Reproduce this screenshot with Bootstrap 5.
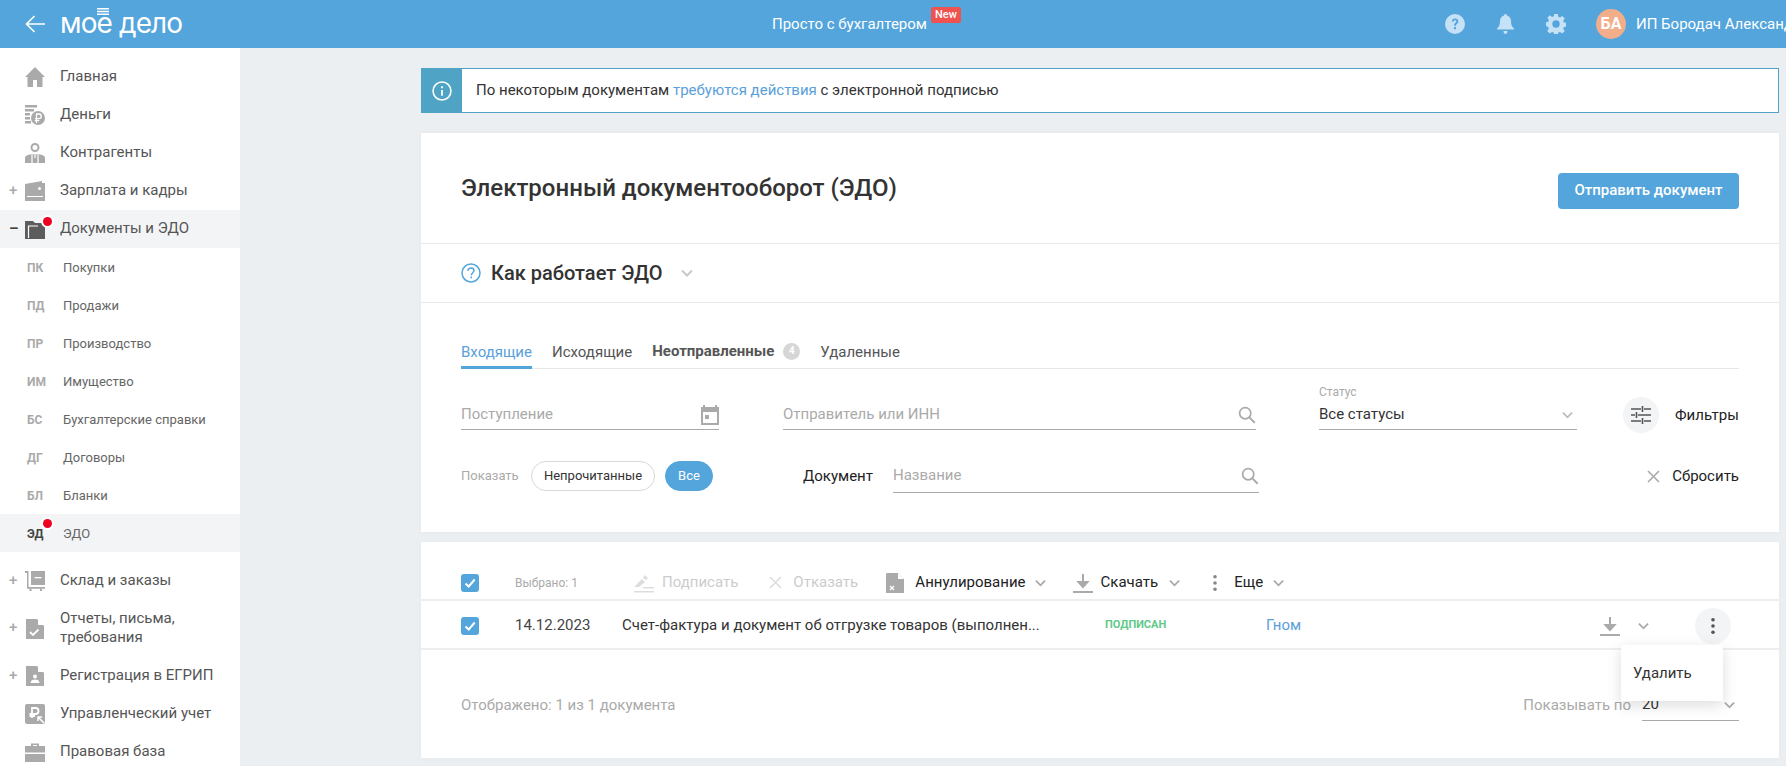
<!DOCTYPE html>
<html lang="ru">
<head>
<meta charset="utf-8">
<title>Электронный документооборот (ЭДО)</title>
<link rel="stylesheet" href="https://cdn.jsdelivr.net/npm/bootstrap@5.3.0/dist/css/bootstrap.min.css">
<style>
html,body{height:100%;overflow:hidden}
body{font-family:Roboto,"Liberation Sans",sans-serif;font-size:15px;background:#ebeff2;color:#333}
a{text-decoration:none}
.topbar{height:48px;background:#53a5dc;color:#fff;white-space:nowrap;overflow:hidden}
.top-left{width:241px;padding-left:25px;flex:none}
.logo-text{position:relative;margin-left:15px;font-family:Inter,sans-serif;font-weight:400;font-size:28px;line-height:48px;letter-spacing:-.9px;top:-1px}
.logo-bars{position:absolute;left:37px;top:9px;width:12px;height:7px}
.top-center{width:1204px;padding-left:531px;flex:none}
.new-tag{background:#ef5350;color:#fff;font-size:11px;font-weight:500;line-height:16px;padding:0 4px;border-radius:2px;margin-left:4px;margin-top:-18px}
.top-icons{gap:32px;flex:none}
.avatar{width:30px;height:30px;border-radius:50%;background:#f2ae8a;font-weight:700;font-size:16px;flex:none;margin-left:30px;margin-right:10px}
.side{width:240px;height:718px;background:#fff;padding-top:10px;flex:none;overflow:hidden;color:#555}
.side-row{height:38px;padding-left:9px;padding-bottom:2px;line-height:19px}
.side-row.tall{height:57px}
.side-row.on,.sub-row.on{background:#f3f4f5}
.group-gap{margin-top:10px}
.tog{width:16px;flex:none;color:#aaa;font-size:15px;line-height:1;font-weight:500}
.tog.dark{color:#444;font-weight:700}
.s-ic{position:relative;top:1px;width:20px;height:20px;flex:none;margin-right:15px}
.s-ic svg{display:block;width:20px;height:20px}
.red-dot{position:absolute;width:9px;height:9px;background:#ee0022;border-radius:50%;box-shadow:0 0 0 2px #fff}
.sub-row{height:38px;padding-left:27px;padding-top:2px;font-size:13px;color:#666;position:relative}
.abbr{width:36px;font-size:12px;font-weight:700;color:#aaa;flex:none}
.sub-row.on .abbr{color:#444}
.main-area{padding:20px 7px 0 181px;flex:1;min-width:0}
.notice{height:45px;background:#fff;border:1px solid #4fa3c4}
.notice-ic{width:40px;background:#4fa3c4;height:100%;flex:none;margin-right:14px}
.bl{color:#5aa0da}
.panel{background:#fff;box-shadow:0 0 6px rgba(0,0,0,.03)}
.panel-a{height:399px;margin-top:20px}
.head-zone{height:111px;padding:0 40px;border-bottom:1px solid #e8eaec}
.page-title{font-size:24px;font-weight:500;color:#333;margin:0}
.send-btn{width:181px;height:36px;background:#53a5dc;border:0;color:#fff;font-weight:500;font-size:15px;border-radius:4px;padding:0;margin-top:5px}
.how-zone{height:59px;padding:0 40px;border-bottom:1px solid #e8eaec}
.how-title{font-size:20px;font-weight:500;color:#333;margin:0 18px 0 10px}
.filter-zone{padding:0 40px}
.tabbar{margin-top:30px;height:36px;border-bottom:1px solid #e4e6e8;gap:20px;color:#555}
.tabbar>span{height:36px;line-height:38px}
.tab-on{color:#5aa0da;border-bottom:3px solid #53a5dc;width:71px}
.tab-b{font-weight:700;color:#555}
.cnt{width:17px;height:17px;background:#d6d6d6;color:#fff;border-radius:50%;font-size:10px;font-weight:700;margin-left:9px;line-height:1}
.frow1{height:61px;align-items:flex-start}
.ufield{height:36px;border-bottom:1px solid #aaa;color:#aaa;flex:none;position:relative;padding-top:6px}
.f1{width:258px;margin-top:25px}
.f2{width:473px;margin-top:25px;margin-left:64px}
.f3{width:258px;margin-top:25px;margin-left:63px;color:#333}
.f3-label{position:absolute;left:0;top:-9px;font-size:12px;color:#aaa;line-height:14px}
.fil-wrap{margin-left:46px;margin-top:28px;color:#222}
.fil-c{width:36px;height:36px;border-radius:50%;background:#f3f4f5;margin-right:16px}
.frow2{height:92px;align-items:center}
.show-l{font-size:13px;color:#aaa;width:70px}
.pill{height:30px;border-radius:15px;border:1px solid #d8d8d8;line-height:28px;font-size:13px;color:#333;width:124px;text-align:center;margin-right:10px}
.pill-on{background:#53a5dc;border-color:#53a5dc;color:#fff;width:48px;margin-right:0}
.doc-l{margin-left:90px;width:90px;color:#222}
.f4{width:366px;height:33px;padding-top:0}
.reset{margin-left:auto;color:#222}
.panel-b{height:216px;margin-top:10px;position:relative}
.tool-row{height:59px;padding:24px 40px 0;border-bottom:2px solid #eceef0;color:#222}
.chk{width:18px;height:18px;border-radius:3px;background:#53a5dc;flex:none}
.sel-t{font-size:12px;color:#aaa;margin-left:36px;width:119px}
.dim{color:#ccc}
.m8{margin-left:8px}.m9{margin-left:9px}.m10{margin-left:10px}.m11{margin-left:11px}.m16{margin-left:16px}.m27{margin-left:27px}.m31{margin-left:31px}.m32{margin-left:32px}
.w-cancel{width:93px}
.doc-row{height:49px;padding:2px 40px 0;border-bottom:2px solid #eceef0;color:#333}
.d-date{margin-left:36px;width:107px;color:#444}
.d-title{width:418px;white-space:nowrap}
.d-stat{margin-left:65px;width:161px;font-size:11px;font-weight:700;color:#5fc98a}
.d-who{width:334px}
.kebab{width:36px;height:36px;border-radius:50%;background:#f3f4f5;margin-left:46px}
.car-gray{color:#aaa}
.foot-row{height:106px;padding:4px 40px 0;color:#aaa}
.pg-l{margin-left:auto;margin-right:11px}
.pg-sel{width:97px;height:31px;border-bottom:1px solid #aaa;color:#333}
.menu-pop{position:absolute;left:1200px;top:103px;width:102px;height:56px;background:#fff;box-shadow:0 4px 14px rgba(0,0,0,.14);padding-left:12px;color:#333;z-index:3}
</style>
</head>
<body>
<svg width="0" height="0" class="position-absolute">
<defs>
<symbol id="caret" viewBox="0 0 12 8"><path d="M1 1.500l5 5 5-5" fill="none" stroke="currentColor" stroke-width="2"/></symbol>
<symbol id="lens" viewBox="0 0 20 20"><circle cx="8" cy="8" r="6.200" fill="none" stroke="currentColor" stroke-width="1.900"/><path d="M12.600 12.600l6 6" stroke="currentColor" stroke-width="2.200"/></symbol>
<symbol id="check" viewBox="0 0 18 18"><path d="M4.500 9.500l3.200 3 6-7" fill="none" stroke="#fff" stroke-width="2"/></symbol>
<symbol id="dl" viewBox="0 0 20 20"><path d="M10 1v12M5.500 9L10 14l4.500-5z" fill="#aaa" stroke="#aaa" stroke-width="2"/><path d="M0 19h20" stroke="#aaa" stroke-width="2"/></symbol>
<symbol id="dots" viewBox="0 0 6 20"><circle cx="3" cy="3" r="2"/><circle cx="3" cy="10" r="2"/><circle cx="3" cy="17" r="2"/></symbol>
</defs>
</svg>

<header class="topbar d-flex align-items-center">
  <div class="top-left d-flex align-items-center">
    <svg width="20" height="18" viewBox="0 0 20 18"><path d="M20 9H1.500M9.500 1L1.500 9l8 8" fill="none" stroke="#fff" stroke-width="1.600"/></svg>
    <span class="logo-text">мое дело<svg class="logo-bars" viewBox="0 0 12 7"><path d="M0 .8h12M0 3.500h12M0 6.200h12" stroke="#fff" stroke-width="1.400"/></svg></span>
  </div>
  <div class="top-center d-flex align-items-center">
    <span>Просто с бухгалтером</span><span class="new-tag">New</span>
  </div>
  <div class="top-icons d-flex align-items-center">
    <svg width="20" height="20" viewBox="0 0 20 20"><circle cx="10" cy="10" r="10" fill="#c5e1f6"/><path d="M6.800 7.600C6.900 5.700 8.200 4.600 10.100 4.600c1.900 0 3.200 1.100 3.200 2.800 0 2.400-2.400 2.300-2.400 4.400H9c0-3 2.300-3 2.300-4.400 0-.8-.5-1.200-1.200-1.200-.8 0-1.300.5-1.400 1.400z M9 13h2v2.200H9z" fill="#53a5dc"/></svg>
    <svg width="17" height="20" viewBox="0 0 17 20"><path d="M8.500 0c1 0 1.400.7 1.400 1.500 2.700.6 4.100 2.900 4.100 5.500 0 3.700.8 5.500 3 7.500v1H0v-1c2.200-2 3-3.800 3-7.500 0-2.600 1.400-4.900 4.100-5.500C7.100.7 7.500 0 8.500 0zM6.500 17h4c0 1.700-.8 3-2 3s-2-1.300-2-3z" fill="#c5e1f6"/></svg>
    <svg width="20" height="20" viewBox="0 0 20 20"><path fill-rule="evenodd" d="M8.200 0h3.600l.5 2.800 1.700.7 2.300-1.600 2.500 2.500-1.600 2.300.7 1.700 2.800.5v3.600l-2.800.5-.7 1.700 1.600 2.300-2.500 2.500-2.300-1.600-1.700.7-.5 2.800H8.200l-.5-2.800-1.700-.7-2.300 1.600-2.500-2.500 1.600-2.300-.7-1.700L-.6 11.700V8.300l2.800-.5.7-1.700L1.300 3.800l2.500-2.500 2.300 1.600 1.700-.7zM10 6.300a3.700 3.700 0 1 0 0 7.400 3.700 3.700 0 0 0 0-7.400z" fill="#c5e1f6"/></svg>
  </div>
  <div class="avatar d-flex align-items-center justify-content-center">БА</div>
  <span>ИП Бородач Александр</span>
</header>

<div class="d-flex">
  <nav class="side">
    <div class="side-row d-flex align-items-center"><span class="tog"></span><span class="s-ic"><svg viewBox="0 0 20 20"><path d="M10 0L0 10h2.500v10h5.500v-7h4v7h5.500V10H20z" fill="#aaa"/></svg></span>Главная</div>
    <div class="side-row d-flex align-items-center"><span class="tog"></span><span class="s-ic"><svg viewBox="0 0 20 20"><path d="M0 0h12v2.500H0zM0 4h9v2.500H0zM0 8h5v2.500H0zM0 12h5v2.500H0zM0 16h6v2.500H0z" fill="#aaa"/><circle cx="13" cy="13" r="7" fill="#aaa"/><path d="M11.500 18V9h2.500a2.300 2.300 0 0 1 0 4.600h-4M9.800 15.700h4.500" fill="none" stroke="#fff" stroke-width="1.300"/></svg></span>Деньги</div>
    <div class="side-row d-flex align-items-center"><span class="tog"></span><span class="s-ic"><svg viewBox="0 0 20 20"><circle cx="10" cy="4.500" r="3.500" fill="none" stroke="#aaa" stroke-width="2"/><path d="M0 20v-5c0-2 3-3.500 6-3.500h8c3 0 6 1.500 6 3.500v5z" fill="#aaa"/><path d="M7 12v8M13 12v8M10 12v3" stroke="#fff" stroke-width="1.200"/></svg></span>Контрагенты</div>
    <div class="side-row d-flex align-items-center"><span class="tog">+</span><span class="s-ic"><svg viewBox="0 0 20 20"><path d="M0 3l17-3v2h3v18H0z" fill="#aaa"/><path d="M2 15.500h16" stroke="#fff" stroke-width="1"/><circle cx="14.500" cy="7.500" r="1.500" fill="#fff"/></svg></span>Зарплата и кадры</div>
    <div class="side-row on d-flex align-items-center"><span class="tog dark">–</span><span class="s-ic"><svg viewBox="0 0 20 20"><path d="M0 2h8l2 2h10v16H0z" fill="#5c5c5c"/><path d="M3.500 19V7h9.500" fill="none" stroke="#fff" stroke-width="1.200"/></svg><span class="red-dot" style="left:18px;top:-2px"></span></span>Документы и ЭДО</div>
    <div class="sub-row d-flex align-items-center"><span class="abbr">ПК</span>Покупки</div>
    <div class="sub-row d-flex align-items-center"><span class="abbr">ПД</span>Продажи</div>
    <div class="sub-row d-flex align-items-center"><span class="abbr">ПР</span>Производство</div>
    <div class="sub-row d-flex align-items-center"><span class="abbr">ИМ</span>Имущество</div>
    <div class="sub-row d-flex align-items-center"><span class="abbr">БС</span>Бухгалтерские справки</div>
    <div class="sub-row d-flex align-items-center"><span class="abbr">ДГ</span>Договоры</div>
    <div class="sub-row d-flex align-items-center"><span class="abbr">БЛ</span>Бланки</div>
    <div class="sub-row on d-flex align-items-center"><span class="abbr">ЭД</span>ЭДО<span class="red-dot" style="left:43px;top:5px"></span></div>
    <div class="side-row group-gap d-flex align-items-center"><span class="tog">+</span><span class="s-ic"><svg viewBox="0 0 20 20"><path d="M0 0h3.500v16H20v1.800H2V2H0z" fill="#aaa"/><path d="M6 0h14v14H6z" fill="#aaa"/><path d="M9.500 6h7v1.300h-7z" fill="#fff"/><circle cx="5.500" cy="19" r="1.200" fill="#aaa"/><circle cx="16" cy="19" r="1.200" fill="#aaa"/></svg></span>Склад и заказы</div>
    <div class="side-row tall d-flex align-items-center"><span class="tog">+</span><span class="s-ic"><svg viewBox="0 0 20 20"><path d="M1 0h11l7 7v13H1z" fill="#aaa"/><path d="M13 0l6 6h-6z" fill="#fff"/><path d="M5 13l3 3 5.500-5.500" fill="none" stroke="#fff" stroke-width="1.800"/></svg></span><span>Отчеты, письма,<br>требования</span></div>
    <div class="side-row d-flex align-items-center"><span class="tog">+</span><span class="s-ic"><svg viewBox="0 0 20 20"><path d="M1 0h11l7 7v13H1z" fill="#aaa"/><path d="M13 0l6 6h-6z" fill="#fff"/><circle cx="10" cy="10.500" r="2" fill="#fff"/><path d="M5.500 17c0-2.500 2-3.500 4.500-3.500s4.500 1 4.500 3.500z" fill="#fff"/></svg></span>Регистрация в ЕГРИП</div>
    <div class="side-row d-flex align-items-center"><span class="tog"></span><span class="s-ic"><svg viewBox="0 0 20 20"><rect width="20" height="20" rx="2" fill="#aaa"/><path d="M7 14V4h3.500a3 3 0 0 1 0 6H4.500M4.500 12H10" fill="none" stroke="#fff" stroke-width="1.800"/><path d="M19 19l-6-6M13 17v-4h4" fill="none" stroke="#fff" stroke-width="1.500"/></svg></span>Управленческий учет</div>
    <div class="side-row d-flex align-items-center"><span class="tog"></span><span class="s-ic"><svg viewBox="0 0 20 20"><path d="M6 4V1.500h8V4h6v6.500H0V4zM8 4h4V3H8zM0 12h20v8H0z" fill="#aaa"/></svg></span>Правовая база</div>
  </nav>

  <main class="main-area">
    <div class="notice d-flex align-items-center">
      <div class="notice-ic d-flex align-items-center justify-content-center"><svg width="20" height="20" viewBox="0 0 19 19"><circle cx="9.500" cy="9.500" r="8.500" fill="none" stroke="#fff" stroke-width="1.500"/><path d="M9.500 8.500v5.500M9.500 5v1.800" stroke="#fff" stroke-width="1.700"/></svg></div>
      <span>По некоторым документам <a class="bl" href="#">требуются действия</a> с электронной подписью</span>
    </div>

    <section class="panel panel-a">
      <div class="head-zone d-flex align-items-center justify-content-between">
        <h1 class="page-title">Электронный документооборот (ЭДО)</h1>
        <button class="btn send-btn" type="button">Отправить документ</button>
      </div>
      <div class="how-zone d-flex align-items-center">
        <svg width="20" height="20" viewBox="0 0 20 20"><circle cx="10" cy="10" r="9" fill="none" stroke="#53a5dc" stroke-width="1.500"/><path d="M7 7.800C7 5.900 8.300 5 10 5c1.800 0 3 1 3 2.600 0 2.100-2.700 2.300-2.700 4.700" fill="none" stroke="#53a5dc" stroke-width="1.500"/><path d="M10.300 13.500v1.800" stroke="#53a5dc" stroke-width="1.600"/></svg>
        <h2 class="how-title">Как работает ЭДО</h2>
        <svg width="12" height="8" style="color:#c8c8c8"><use href="#caret"/></svg>
      </div>
      <div class="filter-zone">
        <div class="tabbar d-flex">
          <span class="tab-on">Входящие</span>
          <span>Исходящие</span>
          <span class="tab-b d-flex align-items-center">Неотправленные<i class="cnt d-flex align-items-center justify-content-center fst-normal">4</i></span>
          <span>Удаленные</span>
        </div>
        <div class="frow1 d-flex">
          <div class="ufield f1 d-flex align-items-center justify-content-between"><span>Поступление</span><svg width="18" height="20" viewBox="0 0 18 20"><path d="M4 0v2h10V0h2v2h2v18H0V2h2V0zM2 7v11h14V7z" fill="#aaa"/><rect x="4" y="10" width="4" height="4" fill="#aaa"/></svg></div>
          <div class="ufield f2 d-flex align-items-center justify-content-between"><span>Отправитель или ИНН</span><svg width="18" height="18"><use href="#lens"/></svg></div>
          <div class="ufield f3 d-flex align-items-center justify-content-between"><span class="f3-label">Статус</span><span>Все статусы</span><svg width="11" height="8" class="me-1" style="color:#bbb"><use href="#caret"/></svg></div>
          <div class="fil-wrap d-flex align-items-center"><span class="fil-c d-flex align-items-center justify-content-center"><svg width="20" height="18" viewBox="0 0 20 18"><path d="M0 3h10M13 3h7M11.500 0v6M0 9h4M7 9h13M5.500 6v6M0 15h10M13 15h7M11.500 12v6" stroke="#555" stroke-width="1.600"/></svg></span>Фильтры</div>
        </div>
        <div class="frow2 d-flex">
          <span class="show-l">Показать</span>
          <span class="pill">Непрочитанные</span>
          <span class="pill pill-on">Все</span>
          <span class="doc-l">Документ</span>
          <div class="ufield f4 d-flex align-items-center justify-content-between"><span>Название</span><svg width="18" height="18"><use href="#lens"/></svg></div>
          <span class="reset d-flex align-items-center gap-2"><svg width="13" height="13" viewBox="0 0 13 13" class="me-1"><path d="M1 1l11 11M12 1L1 12" stroke="#aaa" stroke-width="1.600"/></svg>Сбросить</span>
        </div>
      </div>
    </section>

    <section class="panel panel-b">
      <div class="tool-row d-flex align-items-center">
        <span class="chk"><svg width="18" height="18" class="d-block"><use href="#check"/></svg></span>
        <span class="sel-t">Выбрано: 1</span>
        <svg width="20" height="20" viewBox="0 0 20 20"><path d="M0 14l8-8 3 3-6 5zM9 5l2-3 3 3-2 2zM9 14h11v1.500H9zM0 18h20v1.500H0z" fill="#ddd"/></svg>
        <span class="dim m8">Подписать</span>
        <svg width="13" height="13" viewBox="0 0 13 13" class="m31"><path d="M1 1l11 11M12 1L1 12" stroke="#ddd" stroke-width="1.600"/></svg>
        <span class="dim m11 w-cancel">Отказать</span>
        <svg width="18" height="20" viewBox="0 0 18 20"><path d="M1 0h11l6 6v14H0V1z" fill="#aaa"/><path d="M12 0l6 6h-6z" fill="#fff"/><path d="M4 13l4 4M8 13l-4 4" stroke="#fff" stroke-width="1.300"/></svg>
        <span class="m11">Аннулирование</span>
        <svg width="11" height="8" class="m9 car-gray"><use href="#caret"/></svg>
        <svg width="20" height="20" class="m27"><use href="#dl"/></svg>
        <span class="m8">Скачать</span>
        <svg width="11" height="8" class="m11 car-gray"><use href="#caret"/></svg>
        <svg width="6" height="18" class="m32" style="fill:#888"><use href="#dots"/></svg>
        <span class="m16">Еще</span>
        <svg width="11" height="8" class="m10 car-gray"><use href="#caret"/></svg>
      </div>
      <div class="doc-row d-flex align-items-center">
        <span class="chk"><svg width="18" height="18" class="d-block"><use href="#check"/></svg></span>
        <span class="d-date">14.12.2023</span>
        <span class="d-title">Счет-фактура и документ об отгрузке товаров (выполнен...</span>
        <span class="d-stat">ПОДПИСАН</span>
        <a class="bl d-who" href="#">Гном</a>
        <svg width="20" height="20"><use href="#dl"/></svg>
        <svg width="11" height="8" class="car-gray" style="margin-left:18px"><use href="#caret"/></svg>
        <span class="kebab d-flex align-items-center justify-content-center"><svg width="6" height="18" style="fill:#555"><use href="#dots"/></svg></span>
      </div>
      <div class="foot-row d-flex align-items-center">
        <span>Отображено: 1 из 1 документа</span>
        <span class="pg-l">Показывать по</span>
        <div class="pg-sel d-flex align-items-center justify-content-between"><span>20</span><svg width="11" height="8" class="me-1 car-gray"><use href="#caret"/></svg></div>
      </div>
      <div class="menu-pop d-flex align-items-center">Удалить</div>
    </section>
  </main>
</div>
<script src="https://cdn.jsdelivr.net/npm/bootstrap@5.3.0/dist/js/bootstrap.bundle.min.js"></script>
</body>
</html>
